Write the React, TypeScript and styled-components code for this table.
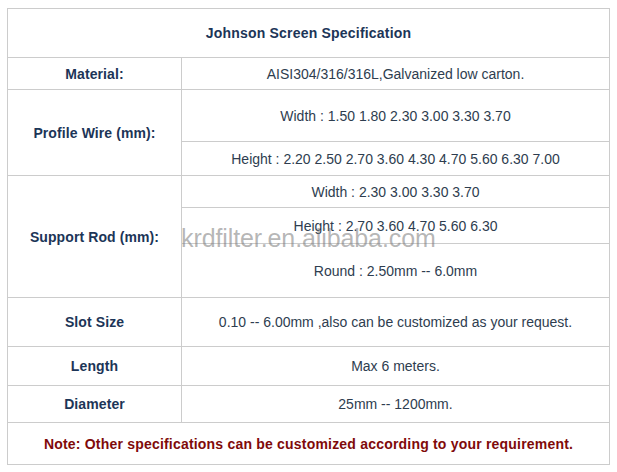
import React from 'react';
import styled, { createGlobalStyle } from 'styled-components';

const GlobalStyle = createGlobalStyle`
  html, body {
    margin: 0;
    padding: 0;
    background: #ffffff;
  }
  body {
    font-family: 'Liberation Sans', Arial, sans-serif;
  }
`;

const Page = styled.div`
  padding: 8px 0 0 7px;
  width: 617px;
  box-sizing: border-box;
  position: relative;
`;

const SpecTable = styled.table`
  border-collapse: collapse;
  width: 603px;
  table-layout: fixed;
  font-size: 14px;
`;

const Col = styled.col<{ w?: number }>`
  width: ${(props) => (props.w ? `${props.w}px` : 'auto')};
`;

const Row = styled.tr<{ h: number }>`
  height: ${(props) => props.h}px;
`;

const Cell = styled.td`
  border: 1px solid #cccccc;
  padding: 0;
  text-align: center;
  vertical-align: middle;
  color: #2e3d4f;
  white-space: nowrap;
`;

const TitleCell = styled(Cell)`
  font-weight: bold;
  color: #1c3557;
  letter-spacing: 0.2px;
`;

const LabelCell = styled(Cell)`
  font-weight: bold;
  color: #1c3557;
  letter-spacing: 0.1px;
`;

const NoteCell = styled(Cell)`
  font-weight: bold;
  color: #7f0a0a;
  letter-spacing: 0.2px;
`;

const Watermark = styled.div`
  position: absolute;
  left: 181px;
  top: 224px;
  font-size: 25px;
  color: rgba(120, 120, 120, 0.55);
  pointer-events: none;
  letter-spacing: -0.1px;
`;

const App: React.FC = () => (
  <>
    <GlobalStyle />
    <Page>
      <SpecTable>
        <colgroup>
          <Col w={174} />
          <Col />
        </colgroup>
        <tbody>
          <Row h={49}>
            <TitleCell colSpan={2}>Johnson Screen Specification</TitleCell>
          </Row>
          <Row h={32}>
            <LabelCell>Material:</LabelCell>
            <Cell>AISI304/316/316L,Galvanized low carton.</Cell>
          </Row>
          <Row h={52}>
            <LabelCell rowSpan={2}>Profile Wire (mm):</LabelCell>
            <Cell>Width : 1.50 1.80 2.30 3.00 3.30 3.70</Cell>
          </Row>
          <Row h={34}>
            <Cell>Height : 2.20 2.50 2.70 3.60 4.30 4.70 5.60 6.30 7.00</Cell>
          </Row>
          <Row h={32}>
            <LabelCell rowSpan={3}>Support Rod (mm):</LabelCell>
            <Cell>Width : 2.30 3.00 3.30 3.70</Cell>
          </Row>
          <Row h={36}>
            <Cell>Height : 2.70 3.60 4.70 5.60 6.30</Cell>
          </Row>
          <Row h={54}>
            <Cell>Round : 2.50mm -- 6.0mm</Cell>
          </Row>
          <Row h={49}>
            <LabelCell>Slot Size</LabelCell>
            <Cell>0.10 -- 6.00mm ,also can be customized as your request.</Cell>
          </Row>
          <Row h={39}>
            <LabelCell>Length</LabelCell>
            <Cell>Max 6 meters.</Cell>
          </Row>
          <Row h={37}>
            <LabelCell>Diameter</LabelCell>
            <Cell>25mm -- 1200mm.</Cell>
          </Row>
          <Row h={42}>
            <NoteCell colSpan={2}>
              Note: Other specifications can be customized according to your requirement.
            </NoteCell>
          </Row>
        </tbody>
      </SpecTable>
      <Watermark>krdfilter.en.alibaba.com</Watermark>
    </Page>
  </>
);

export default App;
